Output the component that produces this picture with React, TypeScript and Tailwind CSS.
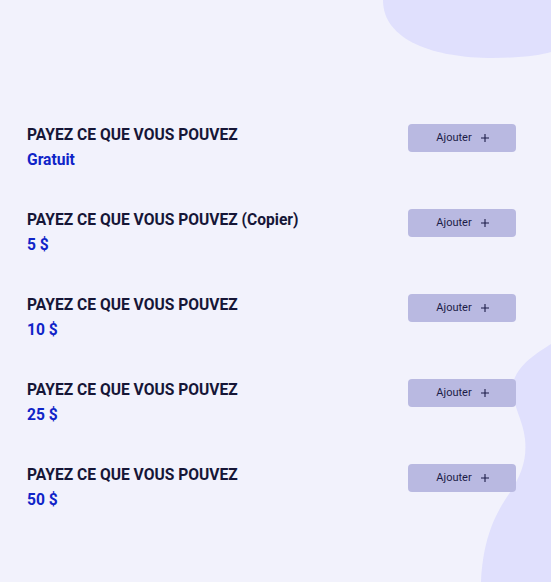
import React from 'react';

const items = [
  { title: 'PAYEZ CE QUE VOUS POUVEZ', price: 'Gratuit' },
  { title: 'PAYEZ CE QUE VOUS POUVEZ (Copier)', price: '5 $' },
  { title: 'PAYEZ CE QUE VOUS POUVEZ', price: '10 $' },
  { title: 'PAYEZ CE QUE VOUS POUVEZ', price: '25 $' },
  { title: 'PAYEZ CE QUE VOUS POUVEZ', price: '50 $' },
];

function PlusIcon() {
  return (
    <svg width="10" height="10" viewBox="0 0 10 10" fill="none">
      <path d="M5 1v8M1 5h8" stroke="#1c1c48" strokeWidth="1.1" />
    </svg>
  );
}

export default function App() {
  return (
    <div
      className="relative w-[551px] h-[582px] overflow-hidden bg-[#f2f2fc]"
      style={{ fontFamily: 'Roboto, "Liberation Sans", sans-serif' }}
    >
      {/* decorative blobs */}
      <svg className="absolute top-0 right-0" width="168" height="60" viewBox="0 0 168 60">
        <path d="M0 0 C 0 40, 50 58, 110 58 C 138 58, 158 55, 168 52 L168 0 Z" fill="#e0e0fd" />
      </svg>
      <svg className="absolute bottom-0 right-0" width="72" height="238" viewBox="0 0 72 238">
        <path
          d="M72 0 C 60 8, 38 20, 34 40 C 32 60, 44 75, 46 95 C 48 115, 43 130, 30 150 C 16 170, 4 195, 2 238 L72 238 Z"
          fill="#e0e0fd"
        />
      </svg>

      <div className="relative flex flex-col pt-[124px] pl-[27px] pr-[35px]">
        {items.map((item, i) => (
          <div key={i} className="flex justify-between items-start h-[85px]">
            <div className="flex flex-col pt-[2px]">
              <span className="text-[15.6px] leading-[18px] font-bold text-[#161637]">{item.title}</span>
              <span className="mt-[7px] text-[15.6px] leading-[18px] font-bold text-[#1024c8]">{item.price}</span>
            </div>
            <button className="w-[108px] h-[28px] rounded-[4px] bg-[#b9b9e1] flex items-center justify-center gap-[8px] pl-[2px] text-[11px] font-normal text-[#1c1c48]">
              <span>Ajouter</span>
              <PlusIcon />
            </button>
          </div>
        ))}
      </div>
    </div>
  );
}
